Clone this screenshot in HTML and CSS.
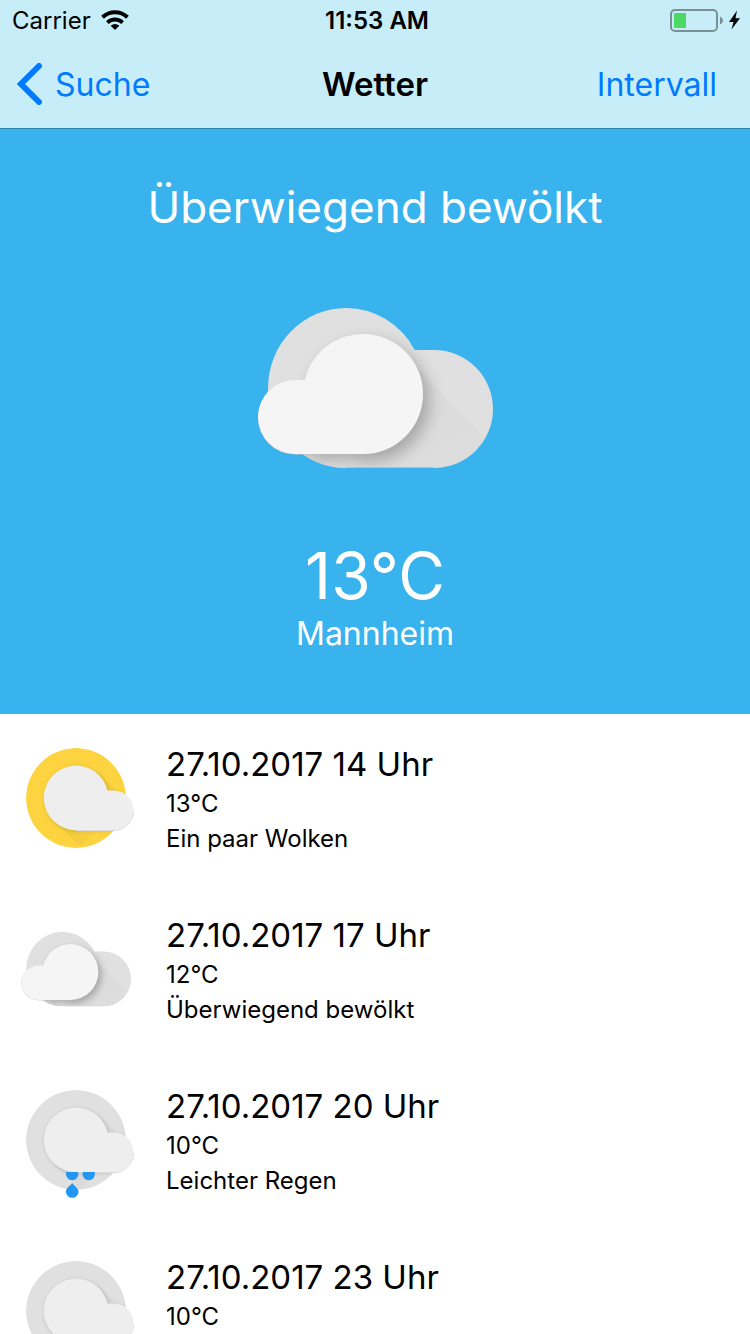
FILE: index.html
```html
<!DOCTYPE html>
<html lang="de">
<head>
<meta charset="utf-8">
<meta name="viewport" content="width=device-width, initial-scale=1">
<title>Wetter</title>
<link rel="stylesheet" href="styles.css">
</head>
<body>
<svg class="defs" aria-hidden="true">
  <defs>
    <filter id="soft" x="-20%" y="-20%" width="150%" height="150%"><feGaussianBlur stdDeviation="8"/></filter>
    <filter id="soft-small" x="-20%" y="-20%" width="150%" height="150%"><feGaussianBlur stdDeviation="2"/></filter>
    <linearGradient id="fold" x1="0" y1="0" x2="1" y2="1">
      <stop offset="0" stop-color="#000" stop-opacity=".04"/>
      <stop offset="1" stop-color="#000" stop-opacity=".01"/>
    </linearGradient>
    <clipPath id="back-clip">
      <ellipse cx="89" cy="81" rx="78" ry="80"/>
      <rect x="89" y="43" width="147" height="118" rx="59"/>
      <rect x="89" y="43" width="80" height="118"/>
    </clipPath>
    <clipPath id="disc-clip"><circle cx="59" cy="59" r="50"/></clipPath>
    <clipPath id="drop-clip"><rect x="40" y="91" width="50" height="20"/></clipPath>
    <symbol id="cloudy" viewBox="0 0 236 161">
      <g clip-path="url(#back-clip)">
        <rect width="236" height="161" fill="#e0e0e0"/>
        <path d="M155 55L236 140V161H0V120Z" fill="url(#fold)"/>
        <g filter="url(#soft)" opacity=".25">
          <circle cx="112" cy="94" r="60"/>
          <rect x="38" y="82" width="71" height="70" rx="35"/>
        </g>
        <path d="M89 160.500H177" stroke="#bdbdbd"/>
      </g>
      <g fill="#bdbdbd">
        <circle cx="106" cy="87.500" r="60"/>
        <path d="M38 75H106V147.500H38Z"/>
        <circle cx="38" cy="110.500" r="37"/>
      </g>
      <g fill="#f5f5f5">
        <circle cx="106" cy="87" r="60"/>
        <path d="M38 73H106V147H38Z"/>
        <circle cx="38" cy="110" r="37"/>
      </g>
    </symbol>
    <symbol id="disc-cloud" viewBox="0 0 118 118">
      <g clip-path="url(#disc-clip)">
        <circle cx="59" cy="59" r="50" fill="currentColor"/>
        <path d="M81 33L112 64V91H79L63 108L36 82Z" fill="#000" opacity=".03"/>
        <g filter="url(#soft-small)" opacity=".15">
          <circle cx="60" cy="60" r="32.500"/>
          <rect x="60" y="53" width="57" height="39" rx="19"/>
        </g>
      </g>
      <path d="M59 91.500H97A19.800 19.800 0 0 0 116.500 72" fill="none" stroke="#d4d4d4"/>
      <path d="M59 91.200A32.300 32.300 0 1 1 90.500 51.500H96.700A19.850 19.850 0 0 1 96.700 91.200Z" fill="#eee"/>
    </symbol>
    <symbol id="drops" viewBox="0 0 118 118">
      <g fill="#2196f3">
        <g clip-path="url(#drop-clip)">
          <circle cx="55.200" cy="93" r="6.200"/>
          <circle cx="71.700" cy="93" r="6.200"/>
        </g>
        <path d="M55.200 102C57 104.500 61.500 107.300 61.500 110.500A6.300 6.300 0 0 1 48.900 110.500C48.900 107.300 53.400 104.500 55.200 102Z"/>
      </g>
    </symbol>
  </defs>
</svg>
<div class="screen">
  <header class="topbar">
    <div class="status">
      <div class="status-left">
        <span>Carrier</span>
        <svg class="wifi" viewBox="0 0 28 20" aria-hidden="true">
          <g fill="none" stroke="#000" stroke-width="4">
            <path d="M1.500 7.300A18 18 0 0 1 26.500 7.300"/>
            <path d="M6.400 12.600A11 11 0 0 1 21.600 12.600"/>
          </g>
          <path d="M14 20L9.700 15.700A6.200 6.200 0 0 1 18.300 15.700Z"/>
        </svg>
      </div>
      <span class="clock">11:53 AM</span>
      <div class="status-right">
        <svg class="battery" viewBox="0 0 72 24" aria-hidden="true">
          <rect x="1" y="2" width="46" height="21" rx="4" fill="none" stroke="#7b9096" stroke-width="2"/>
          <rect x="4" y="5" width="12" height="15" rx="1" fill="#4cd964"/>
          <path d="M50 8.500Q53 10 53 12.500T50 16.500Z" fill="#7b9096"/>
          <path d="M67 2.500L59 14H63.500L61.500 21.500L70 10.300H65.500Z"/>
        </svg>
      </div>
    </div>
    <nav class="nav">
      <button class="nav-button back" type="button">
        <svg class="chevron" viewBox="0 0 26 42" aria-hidden="true"><path d="M22 3L4 21L22 39" fill="none" stroke="#007aff" stroke-width="6" stroke-linecap="round"/></svg>
        <span>Suche</span>
      </button>
      <h1 class="nav-title">Wetter</h1>
      <button class="nav-button interval" type="button">Intervall</button>
    </nav>
  </header>
  <section class="current">
    <h2 class="condition">Überwiegend bewölkt</h2>
    <svg class="current-icon" aria-hidden="true"><use href="#cloudy"/></svg>
    <p class="temperature">13°C</p>
    <p class="city">Mannheim</p>
  </section>
  <ul class="forecast">
    <li class="entry">
      <div class="entry-icon sun"><svg class="art" aria-hidden="true"><use href="#disc-cloud"/></svg></div>
      <div class="entry-text"><h3 class="entry-title">27.10.2017 14 Uhr</h3><p class="detail">13°C</p><p class="detail">Ein paar Wolken</p></div>
    </li>
    <li class="entry">
      <div class="entry-icon"><svg class="art cloud-art" aria-hidden="true"><use href="#cloudy"/></svg></div>
      <div class="entry-text"><h3 class="entry-title">27.10.2017 17 Uhr</h3><p class="detail">12°C</p><p class="detail">Überwiegend bewölkt</p></div>
    </li>
    <li class="entry">
      <div class="entry-icon"><svg class="art" aria-hidden="true"><use href="#disc-cloud"/><use href="#drops"/></svg></div>
      <div class="entry-text"><h3 class="entry-title">27.10.2017 20 Uhr</h3><p class="detail">10°C</p><p class="detail">Leichter Regen</p></div>
    </li>
    <li class="entry">
      <div class="entry-icon"><svg class="art" aria-hidden="true"><use href="#disc-cloud"/></svg></div>
      <div class="entry-text"><h3 class="entry-title">27.10.2017 23 Uhr</h3><p class="detail">10°C</p></div>
    </li>
  </ul>
</div>
</body>
</html>
```
FILE: styles.css
```css
* { box-sizing: border-box; }
body, h1, h2, h3, p, ul { margin: 0; padding: 0; font-weight: 400; }
body {
  font-family: Inter, "Liberation Sans", sans-serif;
  color: #000;
  background: #fff;
}
.defs { position: absolute; width: 0; height: 0; }
.screen { display: flex; flex-direction: column; height: 100vh; overflow: hidden; }
.topbar { flex: none; background: #c7eef8; border-bottom: 1px solid #2b83a9; }
.status, .nav {
  display: grid;
  grid-template-columns: 1fr auto 1fr;
  align-items: center;
}
.status { height: 40px; padding: 0 8px 0 12px; font-size: 24px; }
.status-left { display: flex; align-items: center; gap: 10px; }
.wifi { width: 28px; height: 20px; }
.clock { font-weight: 600; }
.status-right { display: flex; justify-content: flex-end; }
.battery { width: 72px; height: 24px; }
.nav { height: 88px; padding: 0 17px; }
.nav-button {
  display: flex;
  align-items: center;
  padding: 0;
  border: 0;
  background: none;
  color: #007aff;
  font: inherit;
  font-size: 32px;
  cursor: pointer;
}
.back { justify-self: start; gap: 12px; }
.interval { justify-self: end; padding-right: 16px; }
.chevron { width: 26px; height: 42px; }
.nav-title { font-size: 33px; font-weight: 600; }
.current {
  flex: none;
  display: flex;
  flex-direction: column;
  align-items: center;
  padding: 48px 16px 60px;
  background: #38b3ed;
  color: #fff;
}
.condition { font-size: 44px; line-height: 60px; }
.current-icon { width: 236px; height: 161px; margin: 70px 0; }
.temperature { font-size: 64px; line-height: 76px; }
.city { font-size: 32px; line-height: 40px; }
.forecast { list-style: none; }
.entry { display: flex; gap: 31px; padding: 25px 17px 29px; }
.entry-icon { flex: none; width: 118px; height: 117px; color: #e0e0e0; }
.sun { color: #fdd43f; }
.art { display: block; width: 118px; height: 118px; }
.cloud-art { width: 110px; height: 118px; margin-left: 4px; }
.entry-text { padding-top: 3px; }
.entry-title { font-size: 33px; line-height: 44px; }
.detail { font-size: 24px; line-height: 35px; }
```
